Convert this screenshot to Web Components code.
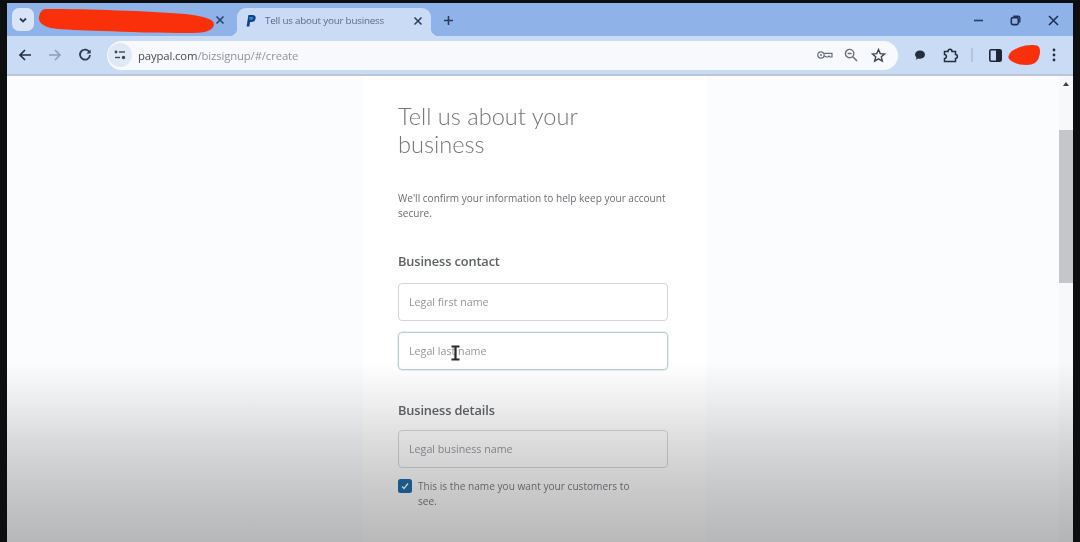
<!DOCTYPE html>
<html>
<head>
<meta charset="utf-8">
<title>Tell us about your business</title>
<style>
  html, body { margin: 0; height: 542px; overflow: hidden; background: #0d0e10; }
</style>
</head>
<body>
<browser-window>
  <tab-strip></tab-strip>
  <tool-bar></tool-bar>
  <page-view>
    <signup-card>
      <h1 slot="title">Tell us about your<br>business</h1>
      <span slot="intro">We'll confirm your information to help keep your account secure.</span>
      <section-label slot="contact" style="margin-bottom: 2px">Business contact</section-label>
      <text-field slot="contact">Legal first name</text-field>
      <text-field slot="contact" focused>Legal last name</text-field>
      <section-label slot="details">Business details</section-label>
      <text-field slot="details">Legal business name</text-field>
      <check-row slot="details">This is the name you want your customers to see.</check-row>
    </signup-card>
  </page-view>
</browser-window>

<script>
(function() {
  const FONT = '"Open Sans", "Noto Sans", sans-serif';

  function define(name, markup) {
    const template = document.createElement("template");
    template.innerHTML = markup;
    customElements.define(name, class extends HTMLElement {
      constructor() {
        super();
        this.attachShadow({mode: "open"}).appendChild(template.content.cloneNode(true));
      }
    });
  }

  define("browser-window", `
    <style>
      :host { display: flex; flex-direction: column; width: 1066px; height: 539px; margin: 3px 0 0 7px;
              overflow: hidden; font-family: ${FONT}; filter: blur(.35px); }
    </style>
    <slot></slot>`);

  define("tab-strip", `
    <style>
      :host { display: flex; align-items: flex-end; height: 33px; flex: none; background: #8fb3e9; color: #23395d; }
      .menu { width: 22px; height: 23px; margin: 0 0 5px 5px; border-radius: 7px; background: #d9e5f7;
              display: flex; align-items: center; justify-content: center; }
      .scribble { margin: 0 0 2px 4px; display: block; }
      .x1 { margin: 0 0 11px -1px; display: block; }
      .tab { position: relative; width: 194px; height: 28px; margin-left: 12px; background: #c9dbf5;
             border-radius: 9px 9px 0 0; display: flex; align-items: center; box-sizing: border-box; padding: 0 8px 3px 9px; }
      .tab::before, .tab::after { content: ""; position: absolute; bottom: 0; width: 8px; height: 8px; }
      .tab::before { left: -8px; background: radial-gradient(circle at 0 0, transparent 8px, #c9dbf5 8.5px); }
      .tab::after { right: -8px; background: radial-gradient(circle at 100% 0, transparent 8px, #c9dbf5 8.5px); }
      .title { flex: 1; margin-left: 9px; font-size: 9.8px; letter-spacing: -.02em; color: #5d6a7e; white-space: nowrap; }
      .plus { margin: 0 0 10px 12px; display: block; }
      .spacer { flex: 1; }
      .win { display: flex; align-items: center; gap: 26px; margin: 0 14px 10px 0; }
      .win svg:last-child { margin-left: 1px; }
      svg { flex: none; }
    </style>
    <div class="menu">
      <svg width="10" height="10" viewBox="0 0 10 10"><path d="M2 3.5 5 6.5 8 3.5" fill="none" stroke="#2b3c5b" stroke-width="1.8"/></svg>
    </div>
    <svg class="scribble" width="178" height="26" viewBox="0 0 178 26"><path d="M8 1C50 1 110 3 147 6C165 8 176 11 176 16C176 22 168 25 155 25C120 25 90 24 64 23C45 22 25 22 13 20C5 18 0 14 1 9C2 4 4 1 8 1Z" fill="#f9300a"/></svg>
    <svg class="x1" width="10" height="10" viewBox="0 0 10 10"><path d="M1.5 1.5 8.5 8.5M8.5 1.5 1.5 8.5" stroke="#2b4371" stroke-width="1.6"/></svg>
    <div class="tab">
      <svg width="10" height="12" viewBox="0 0 10 12"><path d="M2.4 0H6.6C8.8 0 10 1.3 9.6 3.4C9.2 5.6 7.6 7 5.4 7H4L3.4 11.6H.6Z" fill="#0f3f8f"/><path d="M3 2H6C7 2 7.4 2.6 7.2 3.4C7 4.3 6.2 4.8 5.2 4.8H3.6Z" fill="#2790c3"/></svg>
      <span class="title">Tell us about your business</span>
      <svg width="10" height="10" viewBox="0 0 10 10"><path d="M1.5 1.5 8.5 8.5M8.5 1.5 1.5 8.5" stroke="#333c4a" stroke-width="1.5"/></svg>
    </div>
    <svg class="plus" width="11" height="11" viewBox="0 0 11 11"><path d="M5.5 1V10M1 5.5H10" stroke="#2b3c5b" stroke-width="1.6"/></svg>
    <div class="spacer"></div>
    <div class="win">
      <svg width="11" height="11" viewBox="0 0 11 11"><path d="M1 5.5H10" stroke="#2b3f66" stroke-width="1.7"/></svg>
      <svg width="11" height="11" viewBox="0 0 11 11"><rect x="1.3" y="2.6" width="7" height="7" rx="1.6" fill="none" stroke="#1f3157" stroke-width="1.6"/><path d="M3.4 1.2H8.2C9.2 1.2 9.8 1.8 9.8 2.8V7.6" fill="none" stroke="#1f3157" stroke-width="1.4"/></svg>
      <svg width="11" height="11" viewBox="0 0 11 11"><path d="M1 1 10 10M10 1 1 10" stroke="#1f3157" stroke-width="1.6"/></svg>
    </div>`);

  define("tool-bar", `
    <style>
      :host { display: flex; align-items: center; height: 38px; flex: none; background: #c9dbf5;
              border-bottom: 2px solid #b9c6da; box-sizing: content-box; color: #2b3447; }
      svg { display: block; flex: none; }
      .nav { display: flex; gap: 16px; margin-left: 11px; align-items: center; }
      .omni { width: 791px; height: 29px; margin-left: 15px; border-radius: 15px; background: #f7f9fd;
              display: flex; align-items: center; padding: 0 12px 0 1px; box-sizing: border-box; }
      .chip { width: 24px; height: 24px; margin-right: 6px; border-radius: 50%; background: #dfe8f5;
              display: flex; align-items: center; justify-content: center; flex: none; }
      .url { flex: 1; font-size: 11.3px; letter-spacing: -.01em; color: #8d939c; white-space: nowrap; }
      .url b { font-weight: 400; color: #454a52; }
      .in { display: flex; gap: 11px; align-items: center; }
      .out { display: flex; align-items: center; margin-left: 13px; }
    </style>
    <div class="nav">
      <svg width="14" height="14" viewBox="0 0 14 14"><path d="M13 7H2M7 2 2 7 7 12" fill="none" stroke="#252f42" stroke-width="1.7"/></svg>
      <svg width="14" height="14" viewBox="0 0 14 14"><path d="M1 7H12M7 2 12 7 7 12" fill="none" stroke="#8d9db5" stroke-width="1.5"/></svg>
      <svg width="14" height="14" viewBox="0 0 14 14"><path d="M11.6 4.6A5 5 0 1 0 12 7" fill="none" stroke="#2f3a4f" stroke-width="1.8"/><path d="M12.6 1.4V5.6H8.4Z" fill="#2f3a4f"/></svg>
    </div>
    <div class="omni">
      <span class="chip">
        <svg width="12" height="10" viewBox="0 0 12 10"><circle cx="2" cy="2" r="1.4" fill="#3b4656"/><path d="M5 2H11" stroke="#3b4656" stroke-width="1.4"/><path d="M1 7.5H6" stroke="#3b4656" stroke-width="1.4"/><circle cx="9.5" cy="7.5" r="1.7" fill="#3b4656"/></svg>
      </span>
      <span class="url"><b>paypal.com</b>/bizsignup/#/create</span>
      <span class="in">
        <svg width="16" height="10" viewBox="0 0 16 10"><circle cx="4" cy="5" r="3.2" fill="none" stroke="#6a6f78" stroke-width="1.2"/><circle cx="4" cy="5" r="1" fill="#6a6f78"/><path d="M7.2 3.4H15V7H13L12 6 11 7H9.5L8.6 6.4H7.2" fill="none" stroke="#6a6f78" stroke-width="1.2"/></svg>
        <svg width="14" height="14" viewBox="0 0 14 14"><circle cx="5.6" cy="5.6" r="4.2" fill="none" stroke="#6a6f78" stroke-width="1.4"/><path d="M3.6 5.6H7.6M8.8 8.8 13 13" stroke="#6a6f78" stroke-width="1.5"/></svg>
        <svg width="15" height="15" viewBox="0 0 15 15" style="margin-left:2px"><path d="M7.5 1.6 9.2 5.6 13.6 6 10.3 8.8 11.3 13.1 7.5 10.8 3.7 13.1 4.7 8.8 1.4 6 5.8 5.6Z" fill="none" stroke="#3f444d" stroke-width="1.4"/></svg>
      </span>
    </div>
    <div class="out">
      <svg width="12" height="12" viewBox="0 0 12 12" style="margin-left:3px"><path d="M6 1.5C9 1.5 11 3.3 11 5.6C11 8 9 9.7 6 9.7C5.3 9.7 4.7 9.6 4.2 9.4L1.8 10.7 2.5 8.5C1.5 7.7 1 6.7 1 5.6C1 3.3 3 1.5 6 1.5Z" fill="#252e3f"/></svg>
      <svg width="16" height="16" viewBox="0 0 16 16" style="margin-left:17px"><path d="M1.5 4.5H5C5 1.5 9 1.5 9 4.5H12.5V7.5C15 7.5 15 11.5 12.5 11.5V14.5H1.5V11.5C4 11.5 4 7.5 1.5 7.5Z" fill="none" stroke="#252e3f" stroke-width="1.5"/></svg>
      <svg width="2" height="14" viewBox="0 0 2 14" style="margin-left:12px"><path d="M1 0V14" stroke="#a7b4c7" stroke-width="1.2"/></svg>
      <svg width="13" height="13" viewBox="0 0 13 13" style="margin-left:16px"><rect x=".8" y=".8" width="11.4" height="11.4" rx="1.4" fill="none" stroke="#1e2635" stroke-width="1.6"/><rect x="7" y="1" width="5" height="11" fill="#1e2635"/></svg>
      <svg width="34" height="22" viewBox="0 0 34 22" style="margin-left:5px"><path d="M2 11C4 6 9 5 13 3C18 1 27 0 31 2C34 4 33 10 32 13C31 18 26 21 20 21C14 21 10 20 6 18C3 16 0 14 2 11Z" fill="#f9300a"/></svg>
      <svg width="4" height="14" viewBox="0 0 4 14" style="margin-left:11px"><circle cx="2" cy="2" r="1.4" fill="#252e3f"/><circle cx="2" cy="7" r="1.4" fill="#252e3f"/><circle cx="2" cy="12" r="1.4" fill="#252e3f"/></svg>
    </div>`);

  define("page-view", `
    <style>
      :host { position: relative; display: flex; flex: 1; min-height: 0; overflow: hidden; background: #fbfcfe; }
      .main { flex: 1; display: flex; justify-content: center; padding-left: 3px; overflow: hidden; }
      .bar { flex: none; width: 14px; background: #f7f8fa; display: flex; flex-direction: column; align-items: center; }
      .up { width: 0; height: 0; margin-top: 6px; border: 3px solid transparent; border-top: 0; border-bottom: 4px solid #3c3f45; }
      .thumb { width: 100%; height: 153px; margin-top: 44px; background: #c4c6c9; }
      .shade { position: absolute; left: 0; right: 0; bottom: 0; height: 180px; pointer-events: none;
               background: linear-gradient(to bottom, rgba(30,30,34,0), rgba(30,30,34,.07) 22%, rgba(30,30,34,.16) 46%, rgba(30,30,34,.24) 72%, rgba(30,30,34,.31)); }
    </style>
    <div class="main"><slot></slot></div>
    <div class="bar"><div class="up"></div><div class="thumb"></div></div>
    <div class="shade"></div>`);

  define("signup-card", `
    <style>
      :host { display: block; width: 343px; height: 100%; flex: none; background: #fff; padding: 26px 38px 0 35px; box-sizing: border-box; }
      ::slotted(h1) { margin: 0; font: 300 23.6px/28px Lato, "Open Sans", sans-serif; color: #73767a; }
      .intro { margin-top: 33px; font-size: 10.05px; line-height: 15px; color: #6a6e73; }
      .contact { margin-top: 31px; display: flex; flex-direction: column; gap: 11px; }
      .details { margin-top: 31px; display: flex; flex-direction: column; gap: 11px; }
    </style>
    <slot name="title"></slot>
    <div class="intro"><slot name="intro"></slot></div>
    <div class="contact"><slot name="contact"></slot></div>
    <div class="details"><slot name="details"></slot></div>`);

  define("section-label", `
    <style>
      :host { display: block; font-size: 12.8px; line-height: 18px; font-weight: 600; letter-spacing: -.01em; color: #5e6165; }
    </style>
    <slot></slot>`);

  define("text-field", `
    <style>
      :host { display: flex; align-items: center; height: 38px; box-sizing: border-box; position: relative;
              border: 1px solid #d2d7da; border-radius: 4px; padding: 0 10px; font-size: 10.7px; color: #93969a; }
      :host([focused]) { border-color: #b5d2cf; box-shadow: 0 0 0 .5px #cfe2df; }
      .cursor { display: none; position: absolute; left: 51px; top: 12px; }
      :host([focused]) .cursor { display: block; }
    </style>
    <slot></slot>
    <svg class="cursor" width="11" height="16" viewBox="0 0 11 16"><path d="M1.5 1.5H9.5M1.5 14.5H9.5M5.5 1.5V14.5" fill="none" stroke="#2b2d2a" stroke-width="2.2"/></svg>`);

  define("check-row", `
    <style>
      :host { display: flex; gap: 6px; font-size: 10.15px; line-height: 15px; color: #75787c; padding-right: 30px; }
      .box { flex: none; width: 14px; height: 14px; border-radius: 2.5px; background: #1a6ba6;
             display: flex; align-items: center; justify-content: center; }
    </style>
    <div class="box"><svg width="10" height="10" viewBox="0 0 10 10"><path d="M2 5.5 4 7.5 8 2.5" fill="none" stroke="#fff" stroke-width="1.3"/></svg></div>
    <div><slot></slot></div>`);
})();
</script>
</body>
</html>
